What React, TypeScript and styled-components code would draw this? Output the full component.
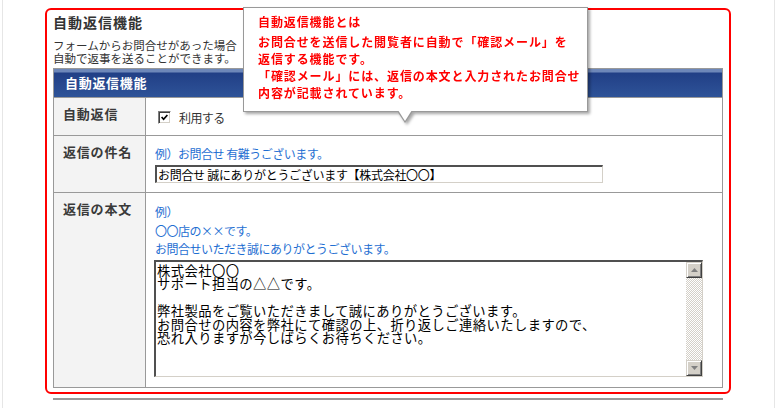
import React from "react";
import styled, { createGlobalStyle } from "styled-components";

const JP = `"Noto Sans CJK JP", "Noto Sans", sans-serif`;

const GlobalStyle = createGlobalStyle`
  html, body { margin: 0; padding: 0; background: #fff; }
  body { font-family: ${JP}; }
  * { box-sizing: border-box; }
`;

const Frame = styled.div`
  width: 773px;
  height: 408px;
  margin-left: 2px;
  border-left: 1px solid #e6e6e6;
  border-right: 1px solid #e6e6e6;
  padding: 8px 0 0 42px;
  overflow: hidden;
`;

const RedBox = styled.section`
  position: relative;
  width: 686px;
  border: 2px solid #f00;
  border-radius: 6px;
  padding: 2px 6px 4px;
`;

const Title = styled.h2`
  margin: 0;
  font-size: 14px;
  line-height: 20px;
  font-weight: bold;
  letter-spacing: 1px;
  color: #333;
`;

const Desc = styled.p`
  margin: 7px 0 0;
  font-size: 11.5px;
  line-height: 13px;
  color: #333;
  white-space: nowrap;
`;

const Table = styled.div`
  margin-top: 3px;
  border: 1px solid #999;
`;

const Header = styled.div`
  height: 28px;
  line-height: 28px;
  padding-left: 11px;
  font-size: 13px;
  font-weight: bold;
  letter-spacing: 0.7px;
  color: #fff;
  background: linear-gradient(#6d87b9 0, #6d87b9 3px, #213f86 4px, #2e5398 100%);
`;

const Row = styled.div`
  display: grid;
  grid-template-columns: 92px 1fr;
  border-top: 1px solid #999;
`;

const Label = styled.div`
  background: #f3f3f3;
  border-right: 1px solid #999;
  padding: 8px 0 0 9px;
  font-size: 13px;
  line-height: 16px;
  font-weight: bold;
  letter-spacing: 0.8px;
  color: #3a3a3a;
`;

const Cell = styled.div<{ $top: number; $bottom: number }>`
  padding: ${(p) => p.$top}px 0 ${(p) => p.$bottom}px 9px;
  background: #fff;
`;

const Example = styled.div<{ $lh: number }>`
  font-size: 12px;
  line-height: ${(p) => p.$lh}px;
  letter-spacing: -0.5px;
  color: #1f6fd2;
`;

const CheckRow = styled.label`
  display: flex;
  align-items: center;
  height: 14px;
  gap: 8px;
  margin-left: 3px;
  font-size: 12px;
  letter-spacing: -0.6px;
  color: #333;
`;

const CheckBox = styled.span`
  display: flex;
  align-items: center;
  justify-content: center;
  width: 13px;
  height: 13px;
  background: #fff;
  border-top: 1px solid #808080;
  border-left: 1px solid #808080;
  border-right: 1px solid #fff;
  border-bottom: 1px solid #fff;
  box-shadow: inset 1px 1px #404040, inset -1px -1px #d4d0c8;
`;

const Input = styled.input`
  display: block;
  width: 448px;
  height: 18px;
  margin-top: 3px;
  padding: 0 0 0 1px;
  border-top: 2px solid #505050;
  border-left: 2px solid #505050;
  border-right: 1px solid #d4d0c8;
  border-bottom: 1px solid #d4d0c8;
  font-family: ${JP};
  font-size: 12px;
  letter-spacing: -0.3px;
  color: #000;
  background: #fff;
  outline: none;
`;

const TextBox = styled.div`
  display: flex;
  width: 549px;
  height: 117px;
  margin: 1px 0 0 -1px;
  border-top: 2px solid #505050;
  border-left: 2px solid #505050;
  border-right: 1px solid #d4d0c8;
  border-bottom: 1px solid #d4d0c8;
  background: #fff;
`;

const Area = styled.textarea`
  flex: 1;
  border: none;
  resize: none;
  outline: none;
  overflow: hidden;
  padding: 2px 1px 0;
  font-family: ${JP};
  font-size: 13.33px;
  line-height: 13.4px;
  letter-spacing: 0.4px;
  color: #000;
  background: #fff;
`;

const Scrollbar = styled.div`
  width: 16px;
  display: flex;
  flex-direction: column;
`;

const ScrollButton = styled.div`
  height: 16px;
  display: flex;
  align-items: center;
  justify-content: center;
  background: #d4d0c8;
  border-top: 1px solid #d4d0c8;
  border-left: 1px solid #d4d0c8;
  border-right: 1px solid #404040;
  border-bottom: 1px solid #404040;
  box-shadow: inset 1px 1px #fff, inset -1px -1px #808080;
`;

const Track = styled.div`
  flex: 1;
  background-color: #fff;
  background-image: conic-gradient(#d4d0c8 25%, #fff 0 50%, #d4d0c8 0 75%, #fff 0);
  background-size: 2px 2px;
`;

const Tooltip = styled.div`
  position: absolute;
  left: 196px;
  top: -3px;
  width: 345px;
  padding: 5px 10px 10px 14px;
  background: #fff;
  border: 1px solid #999;
  color: #f00;
  font-size: 12px;
  font-weight: bold;
  letter-spacing: 0.9px;
  white-space: nowrap;
  filter: drop-shadow(2px 2px 1.5px rgba(0, 0, 0, 0.35));

  &::before,
  &::after {
    content: "";
    position: absolute;
    top: 100%;
    width: 0;
    height: 0;
  }
  &::before {
    left: 153px;
    border-left: 8px solid transparent;
    border-right: 8px solid transparent;
    border-top: 12px solid #999;
  }
  &::after {
    left: 154px;
    margin-top: -1px;
    border-left: 7px solid transparent;
    border-right: 7px solid transparent;
    border-top: 11px solid #fff;
  }
`;

const TipTitle = styled.div`
  line-height: 18px;
  margin-bottom: 2px;
`;

const TipBody = styled.div`
  line-height: 17px;
`;

const NextLine = styled.div`
  width: 670px;
  margin: 4px 0 0 8px;
  border-top: 2px solid #999;
`;

const Arrow = ({ up }: { up?: boolean }) => (
  <svg width="7" height="4" viewBox="0 0 7 4">
    <path d={up ? "M0 4 L3.5 0 L7 4 Z" : "M0 0 L3.5 4 L7 0 Z"} fill="#808080" />
  </svg>
);

const bodyText =
  "株式会社〇〇\nサポート担当の△△です。\n\n弊社製品をご覧いただきまして誠にありがとうございます。\nお問合せの内容を弊社にて確認の上、折り返しご連絡いたしますので、\n恐れ入りますが今しばらくお待ちください。";

export default function App() {
  return (
    <>
      <GlobalStyle />
      <Frame>
        <RedBox>
          <Title>自動返信機能</Title>
          <Desc>
            フォームからお問合せがあった場合
            <br />
            自動で返事を送ることができます。
          </Desc>
          <Table>
            <Header>自動返信機能</Header>
            <Row>
              <Label>自動返信</Label>
              <Cell $top={12} $bottom={11}>
                <CheckRow>
                  <CheckBox>
                    <svg width="7" height="7" viewBox="0 0 7 7">
                      <path d="M0.6 3 L2.6 5.2 L6.4 1" stroke="#000" strokeWidth="1.7" fill="none" />
                    </svg>
                  </CheckBox>
                  利用する
                </CheckRow>
              </Cell>
            </Row>
            <Row>
              <Label>返信の件名</Label>
              <Cell $top={10} $bottom={9}>
                <Example $lh={16}>例）お問合せ 有難うございます。</Example>
                <Input defaultValue="お問合せ 誠にありがとうございます【株式会社〇〇】" />
              </Cell>
            </Row>
            <Row>
              <Label>返信の本文</Label>
              <Cell $top={10} $bottom={10}>
                <Example $lh={18.67}>
                  例）
                  <br />
                  〇〇店の××です。
                  <br />
                  お問合せいただき誠にありがとうございます。
                </Example>
                <TextBox>
                  <Area defaultValue={bodyText} />
                  <Scrollbar>
                    <ScrollButton>
                      <Arrow up />
                    </ScrollButton>
                    <Track />
                    <ScrollButton>
                      <Arrow />
                    </ScrollButton>
                  </Scrollbar>
                </TextBox>
              </Cell>
            </Row>
          </Table>
          <Tooltip>
            <TipTitle>自動返信機能とは</TipTitle>
            <TipBody>
              お問合せを送信した閲覧者に自動で「確認メール」を
              <br />
              返信する機能です。
              <br />
              「確認メール」には、返信の本文と入力されたお問合せ
              <br />
              内容が記載されています。
            </TipBody>
          </Tooltip>
        </RedBox>
        <NextLine />
      </Frame>
    </>
  );
}
